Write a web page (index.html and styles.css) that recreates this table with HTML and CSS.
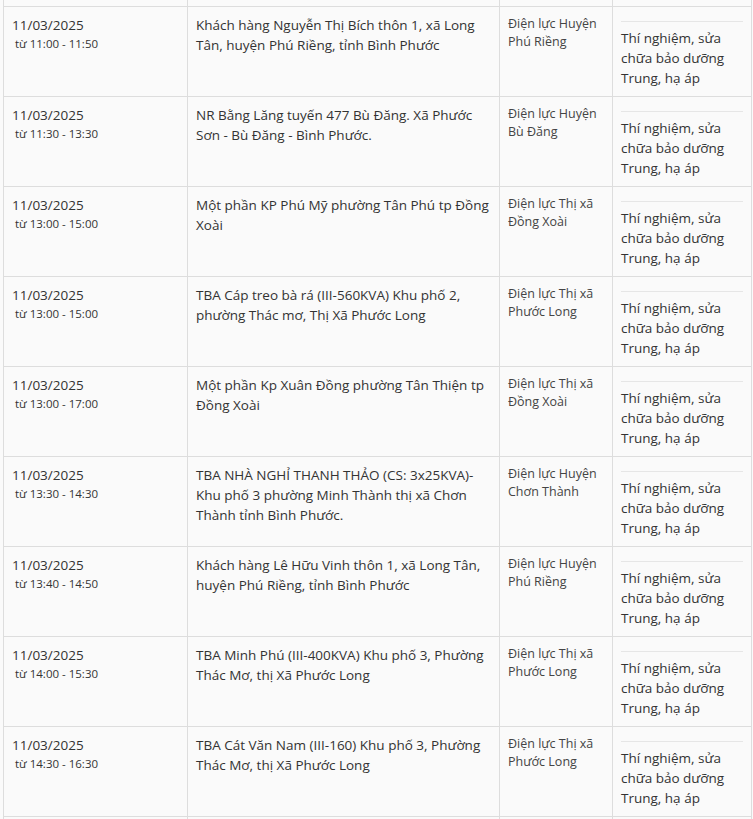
FILE: index.html
```html
<!DOCTYPE html>
<html lang="vi">
<head>
<meta charset="utf-8">
<title>Lịch cắt điện</title>
<link rel="stylesheet" href="styles.css">
</head>
<body>
<div class="wrap">
<table class="sched">
<colgroup>
<col class="c1"><col class="c2"><col class="c3"><col class="c4">
</colgroup>
<tbody>
<tr class="ghost"><td class="date">&nbsp;</td><td class="addr">&nbsp;</td><td class="unit">&nbsp;</td><td class="reason">&nbsp;</td></tr>
<tr>
<td class="date">11/03/2025<span class="time">từ 11:00 - 11:50</span></td>
<td class="addr">Khách hàng Nguyễn Thị Bích thôn 1, xã Long Tân, huyện Phú Riềng, tỉnh Bình Phước</td>
<td class="unit">Điện lực Huyện Phú Riềng</td>
<td class="reason"><hr class="rule"><p>Thí nghiệm, sửa chữa bảo dưỡng Trung, hạ áp</p></td>
</tr>
<tr>
<td class="date">11/03/2025<span class="time">từ 11:30 - 13:30</span></td>
<td class="addr">NR Bằng Lăng tuyến 477 Bù Đăng. Xã Phước Sơn - Bù Đăng - Bình Phước.</td>
<td class="unit">Điện lực Huyện Bù Đăng</td>
<td class="reason"><hr class="rule"><p>Thí nghiệm, sửa chữa bảo dưỡng Trung, hạ áp</p></td>
</tr>
<tr>
<td class="date">11/03/2025<span class="time">từ 13:00 - 15:00</span></td>
<td class="addr">Một phần KP Phú Mỹ phường Tân Phú tp Đồng Xoài</td>
<td class="unit">Điện lực Thị xã Đồng Xoài</td>
<td class="reason"><hr class="rule"><p>Thí nghiệm, sửa chữa bảo dưỡng Trung, hạ áp</p></td>
</tr>
<tr>
<td class="date">11/03/2025<span class="time">từ 13:00 - 15:00</span></td>
<td class="addr">TBA Cáp treo bà rá (III-560KVA) Khu phố 2, phường Thác mơ, Thị Xã Phước Long</td>
<td class="unit">Điện lực Thị xã Phước Long</td>
<td class="reason"><hr class="rule"><p>Thí nghiệm, sửa chữa bảo dưỡng Trung, hạ áp</p></td>
</tr>
<tr>
<td class="date">11/03/2025<span class="time">từ 13:00 - 17:00</span></td>
<td class="addr">Một phần Kp Xuân Đồng phường Tân Thiện tp Đồng Xoài</td>
<td class="unit">Điện lực Thị xã Đồng Xoài</td>
<td class="reason"><hr class="rule"><p>Thí nghiệm, sửa chữa bảo dưỡng Trung, hạ áp</p></td>
</tr>
<tr>
<td class="date">11/03/2025<span class="time">từ 13:30 - 14:30</span></td>
<td class="addr">TBA NHÀ NGHỈ THANH THẢO (CS: 3x25KVA)- Khu phố 3 phường Minh Thành thị xã Chơn Thành tỉnh Bình Phước.</td>
<td class="unit">Điện lực Huyện Chơn Thành</td>
<td class="reason"><hr class="rule"><p>Thí nghiệm, sửa chữa bảo dưỡng Trung, hạ áp</p></td>
</tr>
<tr>
<td class="date">11/03/2025<span class="time">từ 13:40 - 14:50</span></td>
<td class="addr">Khách hàng Lê Hữu Vinh thôn 1, xã Long Tân, huyện Phú Riềng, tỉnh Bình Phước</td>
<td class="unit">Điện lực Huyện Phú Riềng</td>
<td class="reason"><hr class="rule"><p>Thí nghiệm, sửa chữa bảo dưỡng Trung, hạ áp</p></td>
</tr>
<tr>
<td class="date">11/03/2025<span class="time">từ 14:00 - 15:30</span></td>
<td class="addr">TBA Minh Phú (III-400KVA) Khu phố 3, Phường Thác Mơ, thị Xã Phước Long</td>
<td class="unit">Điện lực Thị xã Phước Long</td>
<td class="reason"><hr class="rule"><p>Thí nghiệm, sửa chữa bảo dưỡng Trung, hạ áp</p></td>
</tr>
<tr>
<td class="date">11/03/2025<span class="time">từ 14:30 - 16:30</span></td>
<td class="addr">TBA Cát Văn Nam (III-160) Khu phố 3, Phường Thác Mơ, thị Xã Phước Long</td>
<td class="unit">Điện lực Thị xã Phước Long</td>
<td class="reason"><hr class="rule"><p>Thí nghiệm, sửa chữa bảo dưỡng Trung, hạ áp</p></td>
</tr>
<tr class="ghost">
<td class="date">&nbsp;</td>
<td class="addr">&nbsp;</td>
<td class="unit">&nbsp;</td>
<td class="reason">&nbsp;</td>
</tr>
</tbody>
</table>
</div>
</body>
</html>
```

FILE: styles.css
```css
html, body {
  margin: 0;
  padding: 0;
  background: #fafafa;
  overflow: hidden;
}

.wrap {
  padding-left: 3px;
  height: 819px;
  overflow: hidden;
}

.sched {
  border-collapse: collapse;
  table-layout: fixed;
  width: 748px;
  margin-top: -84px;
  font-family: "Open Sans", "Noto Sans", sans-serif;
  color: #333;
  background: #fafafa;
}

.c1 { width: 184px; }
.c2 { width: 312px; }
.c3 { width: 113px; }
.c4 { width: 139px; }

.sched td {
  border: 1px solid #dddddd;
  padding: 8px;
  vertical-align: top;
  height: 73px;
  font-size: 13.5px;
  line-height: 20px;
}

.time {
  display: block;
  padding-left: 3px;
  font-size: 11.5px;
  line-height: 17px;
}

.sched td.unit {
  font-size: 12.5px;
  line-height: 18px;
  color: #444;
}

.rule {
  border: 0;
  border-top: 1px solid #e6e6e6;
  margin: 6px 0;
  height: 0;
}

.reason p {
  margin: 0;
}
```
